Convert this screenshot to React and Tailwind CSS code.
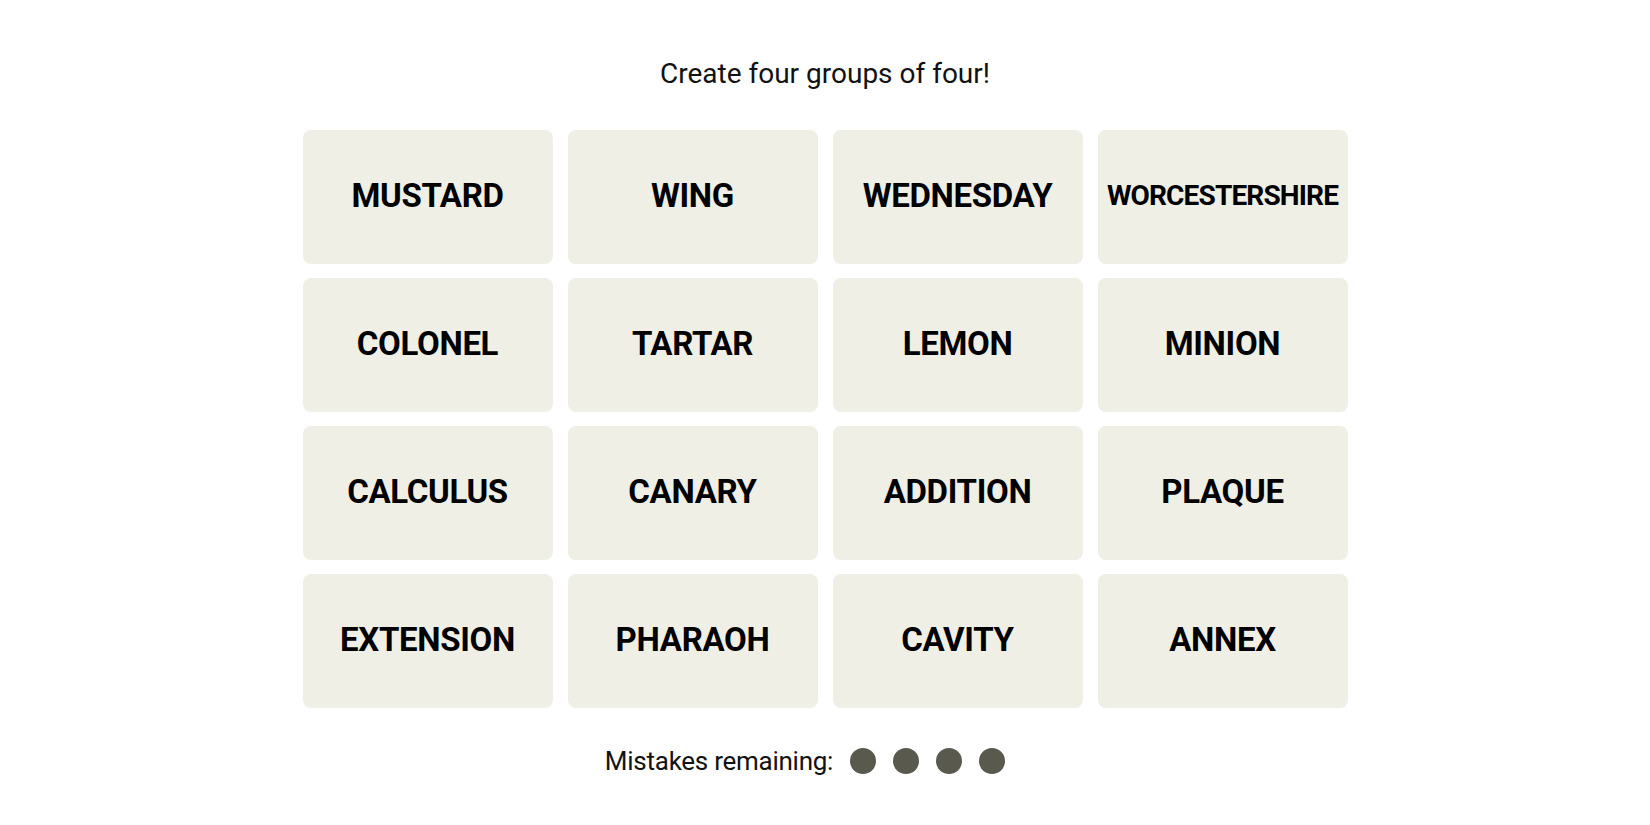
const words = [
  'MUSTARD', 'WING', 'WEDNESDAY', 'WORCESTERSHIRE',
  'COLONEL', 'TARTAR', 'LEMON', 'MINION',
  'CALCULUS', 'CANARY', 'ADDITION', 'PLAQUE',
  'EXTENSION', 'PHARAOH', 'CAVITY', 'ANNEX',
];

function Tile({ word }) {
  const long = word.length > 11;
  return (
    <div className="h-[134px] rounded-[8px] bg-[#efefe6] flex items-center justify-center pb-[3px]">
      <span
        className={
          long
            ? 'text-[28px] font-bold tracking-[-0.03em] text-black'
            : 'text-[33px] font-bold tracking-[-0.01em] text-black'
        }
      >
        {word}
      </span>
    </div>
  );
}

export default function App() {
  return (
    <div className="min-h-[825px] bg-white pt-[58px] font-['Roboto','Liberation_Sans',sans-serif]">
      <p className="text-center text-[28px] leading-[32px] text-[#121212]">Create four groups of four!</p>

      <div className="mx-auto mt-[40px] w-[1045px] grid grid-cols-4 gap-x-[15px] gap-y-[14px]">
        {words.map((w) => (
          <Tile key={w} word={w} />
        ))}
      </div>

      {/* mistakes */}
      <div className="mt-[37px] flex items-center justify-center pr-[40px]">
        <span className="text-[26px] leading-[32px] tracking-[-0.01em] text-[#121212]">Mistakes remaining:</span>
        <div className="ml-[17px] flex gap-[17px]">
          {[0, 1, 2, 3].map((i) => (
            <span key={i} className="w-[26px] h-[26px] rounded-full bg-[#5a594e]" />
          ))}
        </div>
      </div>
    </div>
  );
}
